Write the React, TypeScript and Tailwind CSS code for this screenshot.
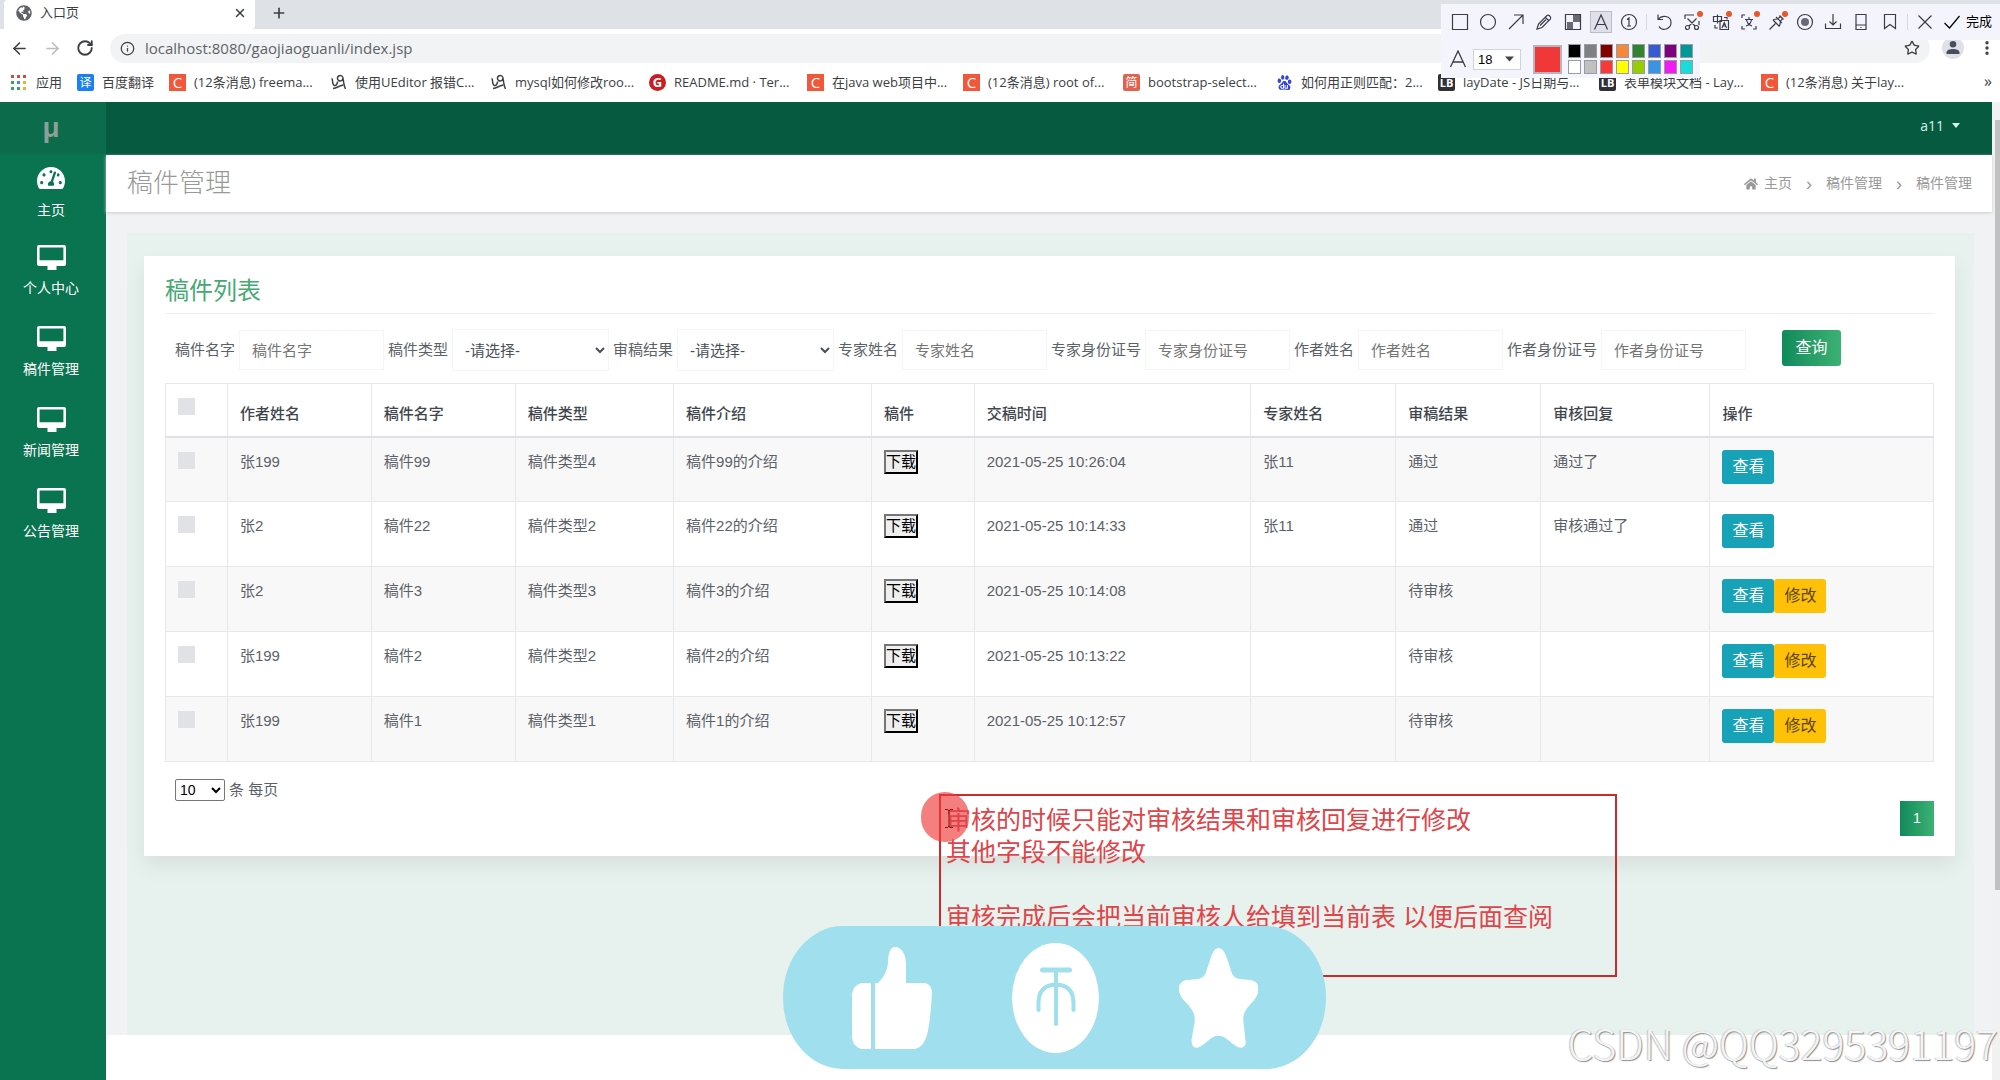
import { ArrowLeft, ArrowRight, EllipsisVertical, Info, Plus, RotateCw, Star, X } from "lucide-react";
import { FaGlobeAmericas, FaHome, FaTachometerAlt } from "react-icons/fa";
import { SiBaidu } from "react-icons/si";

const bookmarks = [
  { icon: "csdn", label: "(12条消息) freema...", width: "w-[118px]" },
  { icon: "blog", label: "使用UEditor 报错C...", width: "w-[117px]" },
  { icon: "blog", label: "mysql如何修改roo...", width: "w-[116px]" },
  { icon: "gitee", label: "README.md · Ter...", width: "w-[115px]" },
  { icon: "csdn", label: "在java web项目中...", width: "w-[113px]" },
  { icon: "csdn", label: "(12条消息) root of...", width: "w-[117px]" },
  { icon: "jian", label: "bootstrap-select...", width: "w-[110px]" },
  { icon: "baidu", label: "如何用正则匹配：2...", width: "w-[119px]" },
  { icon: "layui", label: "layDate - JS日期与...", width: "w-[118px]" },
  { icon: "layui", label: "表单模块文档 - Lay...", width: "w-[119px]" },
  { icon: "csdn", label: "(12条消息) 关于lay...", width: "w-[118px]" },
];

// 16x16 stroke paths for the capture toolbar
const tools = [
  { label: "矩形", path: "M.5.5h15v15H.5z" },
  { label: "椭圆", path: "M8 .5a7.500 7.500 0 1 0 0 15a7.500 7.500 0 1 0 0-15" },
  { label: "箭头", path: "M1 15 15 1M6 1h9v9" },
  { label: "画笔", path: "M1 15l1.500-5L11 1.500c1.500-1.200 4.500 1.500 3.500 3.300L6 13.500zM9.500 3.500l3 3M4 11.500l6-6" },
  { label: "马赛克", path: "M.5.5h15v15H.5z", fill: "M8 1h7v7H8zM2 8h6v7H2z" },
  { label: "文字", path: "M1.500 15.500 8 1l6.500 14.500M4 10.500h8", active: true },
  { label: "序号", path: "M8 .5a7.500 7.500 0 1 0 0 15a7.500 7.500 0 1 0 0-15M6 5.500 8 4v8M6 12h4" },
  { divider: true, label: "divider-1" },
  { label: "撤销", path: "M2 .5v5h5M2 5.500C6 .5 15 1.500 15 8.500c0 7-9 9-12 4" },
  { label: "截图", path: "M1 5V1h9M15 7v4M3.500 4.500 11 12M12.500 4.500 5 12M3.500 11.500a2 2 0 1 0 0 4a2 2 0 1 0 0-4M12.500 11.500a2 2 0 1 0 0 4a2 2 0 1 0 0-4", dot: true },
  { label: "翻译", path: "M.5 2.500h8v5h-8zM4.500.5v9M11 3.500h3v2M2 11v3h3M7 6.500h8.500v9H7zM9 14l2.300-5.500L13.500 14M9.800 12h3", dot: true },
  { label: "识别文字", path: "M1 4V1h3M1 12v3h3M15 12v3h-3M4 5.500h8M8 3v2.500M5 12c3-1 5-3 5.500-6.500M5.500 5.500C6 9 8 11 11 12", dot: true },
  { label: "钉住", path: "M7 3l6 6M10.500 1.500l4 4M11.500 2.500 8.500 5M13.500 4.500 11 8M4 6l6.500 6.500M4 6c2-1 3-1 4.500-1M10.500 12c.5-1.500 1-2.500.5-4M6.500 9.500.5 15.500", dot: true },
  { label: "录屏", path: "M8 .5a7.500 7.500 0 1 0 0 15a7.500 7.500 0 1 0 0-15", fill: "M8 4a4 4 0 1 0 0 8a4 4 0 1 0 0-8" },
  { label: "保存", path: "M.5 9.500v5h15v-5M8 0v11M4.500 7.500 8 11l3.500-3.500" },
  { label: "手机", path: "M3 .5h10v15H3zM3 11h10M8 13v1" },
  { label: "收藏截图", path: "M2.500.5h11v14L8 10.500l-5.500 4z" },
  { divider: true, label: "divider-2" },
  { label: "取消", path: "M1.500 1.500l13 13M14.500 1.500l-13 13" },
];

const swatches = [
  "bg-black",
  "bg-[#808080]",
  "bg-[#800000]",
  "bg-[#f7883a]",
  "bg-[#308430]",
  "bg-[#385ad3]",
  "bg-[#800080]",
  "bg-[#009999]",
  "bg-white",
  "bg-[#c0c0c0]",
  "bg-[#fb3838]",
  "bg-[#ffff00]",
  "bg-[#99cc00]",
  "bg-[#3894e4]",
  "bg-[#f31bf3]",
  "bg-[#16dcdc]",
];

const menu = ["个人中心", "稿件管理", "新闻管理", "公告管理"];

const columns = [
  { title: "作者姓名", width: "w-[8.14%]" },
  { title: "稿件名字", width: "w-[8.14%]" },
  { title: "稿件类型", width: "w-[8.96%]" },
  { title: "稿件介绍", width: "w-[11.2%]" },
  { title: "稿件", width: "w-[5.8%]" },
  { title: "交稿时间", width: "w-[15.65%]" },
  { title: "专家姓名", width: "w-[8.2%]" },
  { title: "审稿结果", width: "w-[8.2%]" },
  { title: "审核回复", width: "w-[9.57%]" },
  { title: "操作", width: "" },
];

const rows = [
  { author: "张199", name: "稿件99", type: "稿件类型4", intro: "稿件99的介绍", time: "2021-05-25 10:26:04", expert: "张11", result: "通过", reply: "通过了" },
  { author: "张2", name: "稿件22", type: "稿件类型2", intro: "稿件22的介绍", time: "2021-05-25 10:14:33", expert: "张11", result: "通过", reply: "审核通过了" },
  { author: "张2", name: "稿件3", type: "稿件类型3", intro: "稿件3的介绍", time: "2021-05-25 10:14:08", expert: "", result: "待审核", reply: "" },
  { author: "张199", name: "稿件2", type: "稿件类型2", intro: "稿件2的介绍", time: "2021-05-25 10:13:22", expert: "", result: "待审核", reply: "" },
  { author: "张199", name: "稿件1", type: "稿件类型1", intro: "稿件1的介绍", time: "2021-05-25 10:12:57", expert: "", result: "待审核", reply: "" },
];

function BookmarkIcon({ icon }: { icon: string }) {
  const box = "flex size-[17px] shrink-0 items-center justify-center ";
  if (icon === "csdn") {
    return <span className={box + "bg-[#f2573a] text-[15px] leading-none text-white"}>C</span>;
  }
  if (icon === "gitee") {
    return <span className={box + "rounded-full bg-[#c71d23] text-[13px] leading-none font-bold text-white"}>G</span>;
  }
  if (icon === "jian") {
    return <span className={box + "rounded-xs bg-[#e2624f] text-[12px] leading-none text-white"}>简</span>;
  }
  if (icon === "fanyi") {
    return <span className={box + "rounded-xs bg-[#1a80f0] text-[12px] leading-none text-white"}>译</span>;
  }
  if (icon === "layui") {
    return <span className={box + "rounded-xs bg-[#2f3136] text-[11px] leading-none font-bold text-white"}>LB</span>;
  }
  if (icon === "baidu") {
    return (
      <span className={box}>
        <SiBaidu className="size-[15px] text-[#3245df]" />
      </span>
    );
  }
  return (
    <svg viewBox="0 0 17 17" className="size-[17px] shrink-0" fill="none" stroke="#3c4043" strokeWidth="1.5">
      <path d="M1.500 4.500c2 .5 0 6.500 3 7 2 .3 3-2 3-4" />
      <path d="M13 4.500a2.800 2.800 0 1 0-4.500 2c2 1.200 4.500 0 4.500-2.500.5 4 1 8 2.500 11" />
      <path d="M3 14.500c4-.5 6.500-3 10.500-3.500" />
    </svg>
  );
}

function AppsIcon() {
  return (
    <svg viewBox="0 0 15 15" className="size-[15px] shrink-0">
      <path fill="#d9483b" d="M0 0h3v3H0zM6 0h3v3H6zM12 0h3v3h-3z" />
      <path fill="#4285f4" d="M6 6h3v3H6z" />
      <path fill="#34a853" d="M0 6h3v3H0zM0 12h3v3H0zM6 12h3v3H6z" />
      <path fill="#ecb22e" d="M12 6h3v3h-3zM12 12h3v3h-3z" />
    </svg>
  );
}

function MonitorIcon() {
  return (
    <svg viewBox="0 0 29 25" className="h-[25px] w-[29px]" fill="currentColor">
      <path
        fillRule="evenodd"
        d="M2 0h25a2 2 0 0 1 2 2v17a2 2 0 0 1-2 2h-7.500v4h-9v-4H2a2 2 0 0 1-2-2V2a2 2 0 0 1 2-2zm.6 2.500v12.700h23.800V2.500z"
      />
    </svg>
  );
}

function BrowserBar() {
  return (
    <header className="h-[102px] overflow-hidden bg-white text-[#3c4043]">
      <div className="flex h-[29px] bg-[#dee1e6]">
        <div className="ml-1 flex w-[251px] items-center rounded-tl-sm rounded-br-sm bg-white pr-2 pb-1 pl-3">
          <FaGlobeAmericas className="size-4 text-[#5f6368]" />
          <span className="ml-2 flex-1 text-[13px]">入口页</span>
          <button aria-label="关闭标签页">
            <X className="size-3.5" strokeWidth={2.5} />
          </button>
        </div>
        <button aria-label="新标签页" className="ml-4 pb-1">
          <Plus className="size-4" strokeWidth={2.5} />
        </button>
      </div>

      <div className="flex h-[38px] items-center pr-1 pl-2.5">
        <button aria-label="后退">
          <ArrowLeft className="size-[19px]" />
        </button>
        <button aria-label="前进" className="ml-3.5 text-[#babcbe]">
          <ArrowRight className="size-[19px]" />
        </button>
        <button aria-label="重新加载" className="ml-3.5">
          <RotateCw className="size-[18px]" strokeWidth={2.5} />
        </button>
        <div className="ml-4 flex h-[29px] flex-1 items-center rounded-full bg-[#f1f3f4] px-2.5">
          <Info className="size-[15px]" />
          <input
            aria-label="地址"
            readOnly
            value="localhost:8080/gaojiaoguanli/index.jsp"
            className="ml-2.5 flex-1 bg-transparent font-['Open_Sans','Noto_Sans_CJK_SC',sans-serif] text-[15px] text-[#5f6368] outline-none"
          />
          <button aria-label="收藏">
            <Star className="size-4" />
          </button>
        </div>
        <button
          aria-label="账户"
          className="ml-3 flex size-[22px] items-center justify-center rounded-full bg-[#dfe1e9]"
        >
          <svg viewBox="0 0 14 14" className="size-3.5" fill="#4a4e5c">
            <path d="M7 0a3.300 3.300 0 1 1 0 6.600A3.300 3.300 0 0 1 7 0zM.5 13v-1.500C.5 9 4 8 7 8s6.500 1 6.500 3.500V13z" />
          </svg>
        </button>
        <button aria-label="菜单" className="ml-3.5">
          <EllipsisVertical className="size-[18px]" strokeWidth={2.5} />
        </button>
      </div>

      <nav className="flex h-[35px] items-center pb-1 pl-[11px] font-['Open_Sans','Noto_Sans_CJK_SC',sans-serif] text-[13px] whitespace-nowrap">
        <a href="#apps" className="flex items-center gap-2.5">
          <AppsIcon />
          <span className="w-[41px]">应用</span>
        </a>
        <a href="#fanyi" className="flex items-center gap-2">
          <BookmarkIcon icon="fanyi" />
          <span className="w-[67px]">百度翻译</span>
        </a>
        <div className="flex flex-1 gap-[18px]">
          {bookmarks.map((item) => (
            <a key={item.label} href="#bookmark" className="flex items-center gap-2">
              <BookmarkIcon icon={item.icon} />
              <span className={item.width}>{item.label}</span>
            </a>
          ))}
        </div>
        <button aria-label="更多书签" className="pr-2 pb-1 text-[16px] leading-none">
          »
        </button>
      </nav>
    </header>
  );
}

function CaptureToolbar() {
  return (
    <div className="absolute top-1 right-0 w-[559px] text-[#3b3b4a]">
      <div className="flex h-9 items-center bg-[#f4f5fc] pr-2 pl-2">
        <div className="flex flex-1 items-center justify-between">
          {tools.map((tool) =>
            tool.divider ? (
              <span key={tool.label} className="h-4 w-px bg-[#d6d8e2]" />
            ) : (
              <button
                key={tool.label}
                aria-label={tool.label}
                className={
                  tool.active
                    ? "relative flex size-[22px] items-center justify-center border border-[#b9bbc6] bg-[#dfe0ea]"
                    : "relative flex size-[22px] items-center justify-center"
                }
              >
                <svg viewBox="0 0 16 16" className="size-4 overflow-visible">
                  <path d={tool.path} fill="none" stroke="currentColor" strokeWidth="1.2" />
                  {tool.fill && <path d={tool.fill} fill="currentColor" opacity=".75" />}
                </svg>
                {tool.dot && <span className="absolute top-0 right-0 size-1.5 rounded-full bg-[#e8562a]" />}
              </button>
            )
          )}
        </div>
        <button className="ml-2 flex items-center gap-1.5 text-[13px] text-black">
          <svg viewBox="0 0 16 16" className="size-4" fill="none" stroke="currentColor" strokeWidth="1.2">
            <path d="M.5 9 5.500 14 15.500 2" />
          </svg>
          完成
        </button>
      </div>
      <div className="flex h-[38px] w-[259px] items-center bg-[#f4f5fc] pl-2">
        <svg viewBox="0 0 18 18" className="size-[18px]" fill="none" stroke="currentColor" strokeWidth="1.3">
          <path d="M1.500 17 9 1l7.500 16M4 12h10" />
        </svg>
        <button
          aria-label="字号"
          className="ml-1.5 flex h-[21px] w-12 items-center justify-between border border-[#d0d2dc] bg-white px-1 text-[13px] leading-none text-black"
        >
          18
          <svg viewBox="0 0 9 5" className="mr-0.5 h-[6px] w-[9px]">
            <path d="M0 0h9L4.500 5z" fill="#444" />
          </svg>
        </button>
        <span className="ml-3 size-[29px] border-2 border-[#b5b5bd] bg-[#f03838]" />
        <div className="ml-1.5 grid grid-cols-8 gap-x-[3px] gap-y-0.5">
          {swatches.map((color) => (
            <button key={color} aria-label="颜色" className={"h-3.5 w-[13px] border border-[#9a9aa5] " + color} />
          ))}
        </div>
      </div>
    </div>
  );
}

function Sidebar() {
  return (
    <aside className="w-[106px] shrink-0 bg-[#0a7350] text-white">
      <div className="flex h-[52px] items-center justify-center bg-[#0c6b4b] pr-1 text-[28px] font-bold text-[#8d9f98]">
        μ
      </div>
      <nav className="pr-1 text-[14px] leading-5">
        <a href="#home" className="flex h-[81px] flex-col items-center pt-2.5">
          <FaTachometerAlt className="size-7" />
          <span className="mt-2">主页</span>
        </a>
        {menu.map((item) => (
          <a key={item} href="#menu" className="flex h-[81px] flex-col items-center pt-2.5">
            <MonitorIcon />
            <span className="mt-2">{item}</span>
          </a>
        ))}
      </nav>
    </aside>
  );
}

function TextFilter({ id, label }: { id: string; label: string }) {
  return (
    <>
      <label htmlFor={id}>{label}</label>
      <input
        id={id}
        placeholder={label}
        className="h-10 w-[145px] border border-[#f4f5f6] px-3 placeholder:text-[#757575]"
      />
    </>
  );
}

function SelectFilter({ id, label }: { id: string; label: string }) {
  return (
    <>
      <label htmlFor={id}>{label}</label>
      <select id={id} className="h-[42px] w-[157px] border border-[#f4f5f6] bg-white pl-2 text-[#495057]">
        <option>-请选择-</option>
      </select>
    </>
  );
}

function ManuscriptTable() {
  const cell = "border border-[#e6e8eb] p-3 align-top";
  const checkbox = "mt-0.5 block size-[17px] appearance-none bg-[#e1e2e5]";
  return (
    <table className="mt-3 w-full table-fixed border-collapse text-left leading-6">
      <thead>
        <tr className="h-[53px] text-[#3f464d]">
          <th className="w-[3.5%] border border-b-2 border-[#e6e8eb] border-b-[#dee2e6] p-3 align-top">
            <input type="checkbox" aria-label="全选" className={checkbox} />
          </th>
          {columns.map((col) => (
            <th
              key={col.title}
              className={"border border-b-2 border-[#e6e8eb] border-b-[#dee2e6] px-3 pb-2.5 align-bottom font-medium " + col.width}
            >
              {col.title}
            </th>
          ))}
        </tr>
      </thead>
      <tbody>
        {rows.map((row) => (
          <tr key={row.time} className="h-[65px] odd:bg-[#f8f8f9]">
            <td className={cell}>
              <input type="checkbox" aria-label={row.name} className={checkbox} />
            </td>
            <td className={cell}>{row.author}</td>
            <td className={cell}>{row.name}</td>
            <td className={cell}>{row.type}</td>
            <td className={cell}>{row.intro}</td>
            <td className={cell}>
              <button className="block h-6 w-[34px] overflow-hidden border-2 border-[#767676] border-r-black border-b-black bg-[#efefef] text-[15px] leading-5 text-black">
                下载
              </button>
            </td>
            <td className={cell}>{row.time}</td>
            <td className={cell}>{row.expert}</td>
            <td className={cell}>{row.result}</td>
            <td className={cell}>{row.reply}</td>
            <td className={cell}>
              <div className="flex text-[16px]">
                <button className="h-[34px] w-[52px] rounded-[3px] bg-[#17a2b8] text-white">查看</button>
                {row.result === "待审核" && (
                  <button className="h-[34px] w-[52px] rounded-[3px] bg-[#ffc107] text-[#5a4614]">修改</button>
                )}
              </div>
            </td>
          </tr>
        ))}
      </tbody>
    </table>
  );
}

function Annotation() {
  return (
    <div className="absolute top-[794px] left-[939px] h-[183px] w-[678px] border-2 border-[#cc2a2f] pt-2 pl-[5px] text-[25px] leading-8 whitespace-nowrap text-[#e04448]">
      <span className="absolute -top-1 -left-5 h-[50px] w-12 rounded-full bg-[#f03a3a]/65" />
      <p className="relative">审核的时候只能对审核结果和审核回复进行修改</p>
      <p className="relative">其他字段不能修改</p>
      <p className="mt-[33px]">审核完成后会把当前审核人给填到当前表 以便后面查阅</p>
      <svg viewBox="0 0 8 19" className="absolute top-[13px] left-1 h-[19px] w-2" fill="none" stroke="#8a1414">
        <path d="M0 .5h3L4 2l1-1.500h3M4 2v15M0 18.500h3L4 17l1 1.500h3" />
      </svg>
    </div>
  );
}

function ReactionPill() {
  return (
    <div className="absolute top-[926px] left-[783px] flex h-[143px] w-[543px] items-center justify-between rounded-[60px_/_71px] bg-[#a0dfed] pr-[68px] pl-[69px] text-white">
      <svg viewBox="0 0 80 102" className="h-[102px] w-20" fill="currentColor">
        <path d="M10 36h9v66h-9C4 101 0 96 0 89V49c0-7 4-12 10-13z" />
        <path d="M23 36h3c6-6 9-12 10-20C36 7 38 0 43 0c7 0 11 8 11 17v19h17c6 0 9 4 9 10-1 15-2 30-5 42-3 9-7 14-14 14H23z" />
      </svg>
      <svg viewBox="0 0 87 110" className="h-[110px] w-[87px]">
        <ellipse cx="43.500" cy="55" rx="43.500" ry="55" fill="currentColor" />
        <g fill="none" stroke="#a0dfed" strokeLinecap="round">
          <path strokeWidth="5" d="M30.500 27h27" />
          <path strokeWidth="4" d="M44 27v54" />
          <path strokeWidth="4" d="M26.500 67V60C26.500 49 32 42 44 41.500 56 42 61.500 49 61.500 60v7" />
        </g>
      </svg>
      <svg viewBox="0 0 79 100" className="h-[100px] w-[79px]" fill="currentColor">
        <path d="M39.500 0c4 0 6 4 8 9l4 12c2 7 4 9 9 10l11 1c6 1 9 5 8 11-1 5-4 9-8 13-6 7-8 11-7 19l2 17c1 7-3 9-8 7-5-3-8-6-12-9-5-3-9-3-14 0-4 3-7 6-12 9-5 2-8 0-8-7l3-17c1-8-1-12-7-19C4 52 1 48 0 43c-1-6 2-10 8-11l11-1c5-1 7-3 9-10l4-12c2-5 4-9 7.500-9z" />
      </svg>
    </div>
  );
}

export default function App() {
  return (
    <div className="relative flex min-h-screen flex-col overflow-hidden bg-white font-['Liberation_Sans','Noto_Sans_CJK_SC',sans-serif] text-[15px] text-[#5b6168]">
      <BrowserBar />

      <div className="flex flex-1">
        <Sidebar />

        <div className="min-w-0 flex-1">
          <div className="flex h-[53px] items-center justify-end bg-[#065a40] pr-8 pb-1.5">
            <button className="flex items-center gap-2 font-['Open_Sans',sans-serif] text-[14px] text-[#d5f3e6]">
              a11
              <svg viewBox="0 0 8 5" className="h-[5px] w-2">
                <path d="M0 0h8L4 5z" fill="currentColor" />
              </svg>
            </button>
          </div>

          <div className="relative flex h-[57px] items-center justify-between bg-white pr-5 pl-[21px] shadow-[0_1px_3px_#c9ccd2]">
            <h1 className="text-[26px] font-light text-[#999]">稿件管理</h1>
            <nav className="flex items-center text-[14px] text-[#999]">
              <FaHome className="size-3.5" />
              <a href="#home" className="ml-1.5">
                主页
              </a>
              <span className="mx-3.5 text-[18px] leading-none">›</span>
              <a href="#list">稿件管理</a>
              <span className="mx-3.5 text-[18px] leading-none">›</span>
              <span>稿件管理</span>
            </nav>
          </div>

          <main className="bg-[#f1f2f4] pt-[21px] pr-[18px] pl-[21px]">
            <div className="bg-[#e7f1ed] pt-[23px] pr-[19px] pb-[179px] pl-[17px]">
              <section className="bg-white px-[21px] pt-[19px] pb-5 shadow-[0_10px_20px_rgba(0,0,0,0.07)]">
                <h2 className="border-b border-[#eceef0] pb-1.5 text-[24px] leading-8 text-[#45a974]">
                  稿件列表
                </h2>

                <form className="mt-[15px] flex flex-wrap items-center gap-1 pl-2.5">
                  <TextFilter id="name" label="稿件名字" />
                  <SelectFilter id="type" label="稿件类型" />
                  <SelectFilter id="result" label="审稿结果" />
                  <TextFilter id="expert" label="专家姓名" />
                  <TextFilter id="expert-id" label="专家身份证号" />
                  <TextFilter id="author" label="作者姓名" />
                  <TextFilter id="author-id" label="作者身份证号" />
                  <button
                    type="button"
                    className="mb-1 ml-8 h-9 w-[59px] rounded-[3px] bg-linear-to-r from-[#0f8a5c] to-[#3bb273] text-[16px] text-white"
                  >
                    查询
                  </button>
                </form>

                <ManuscriptTable />

                <div className="flex items-start justify-between pt-[17px] pl-2.5">
                  <label className="flex items-center gap-1">
                    <select className="h-[22px] w-[50px] rounded-xs border border-[#767676] bg-white text-[14px] text-black">
                      <option>10</option>
                    </select>
                    条 每页
                  </label>
                  <button className="mt-[22px] h-[35px] w-[34px] bg-linear-to-r from-[#0f8a5c] to-[#3bb273] text-[14px] text-white">
                    1
                  </button>
                </div>
              </section>
            </div>
          </main>
        </div>

        {/* Page scrollbar */}
        <div className="w-2 shrink-0 bg-[#f1f1f1] pt-[18px] pl-[3px]">
          <div className="h-[770px] bg-[#c1c1c1]" />
        </div>
      </div>

      <CaptureToolbar />
      <Annotation />
      <ReactionPill />

      <p className="absolute right-0.5 bottom-2.5 font-['Noto_Sans_CJK_SC',sans-serif] text-[41px] leading-[56px] font-light text-[#f4f4f4] [text-shadow:1px_1px_1px_#8f8f8f,-1px_0_1px_#c4c4c4]">
        CSDN @QQ3295391197
      </p>
    </div>
  );
}
